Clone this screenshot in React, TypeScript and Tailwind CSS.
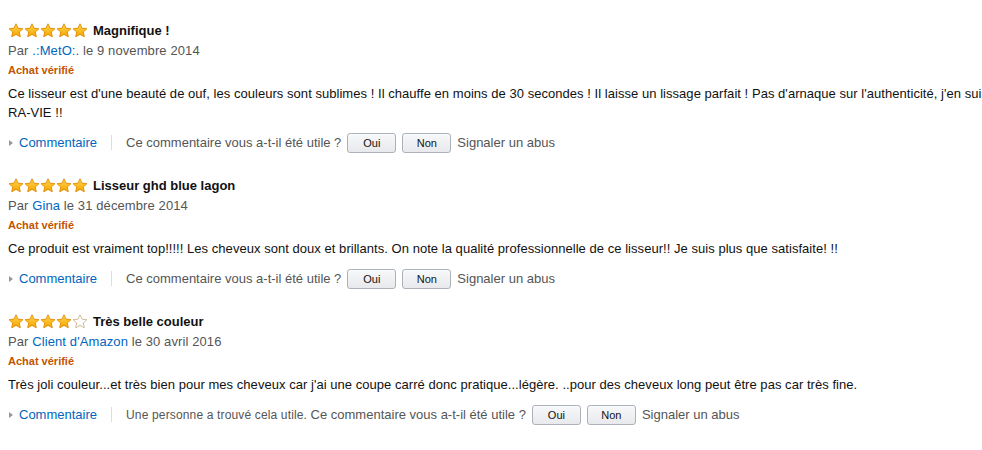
import React from "react";

function Star({ filled }: { filled: boolean }) {
  return (
    <svg width="16" height="15" viewBox="0 0 16 15" className="block">
      <defs>
        <linearGradient id="sg" x1="0" y1="0" x2="0" y2="1">
          <stop offset="0" stopColor="#ffd54a" />
          <stop offset="1" stopColor="#f6a500" />
        </linearGradient>
      </defs>
      <path
        d="M8 0.8 L10.1 5.2 L14.9 5.7 L11.3 9 L12.3 13.8 L8 11.4 L3.7 13.8 L4.7 9 L1.1 5.7 L5.9 5.2 Z"
        fill={filled ? "url(#sg)" : "#ffffff"}
        stroke={filled ? "#e08a00" : "#c9b38a"}
        strokeWidth="0.9"
        strokeLinejoin="round"
      />
    </svg>
  );
}

function Btn({ label }: { label: string }) {
  return (
    <button className="h-[20px] w-[49px] rounded-[3px] border border-[#adb1b8] bg-gradient-to-b from-[#f7f8fa] to-[#e7e9ec] text-[11px] leading-[18px] text-[#111] shadow-[inset_0_1px_0_rgba(255,255,255,0.6)]">
      {label}
    </button>
  );
}

type Review = {
  stars: number;
  title: string;
  author: string;
  date: string;
  body: string;
  helpful?: string;
};

const reviews: Review[] = [
  {
    stars: 5,
    title: "Magnifique !",
    author: ".:MetO:.",
    date: "le 9 novembre 2014",
    body:
      "Ce lisseur est d'une beauté de ouf, les couleurs sont sublimes ! Il chauffe en moins de 30 secondes ! Il laisse un lissage parfait ! Pas d'arnaque sur l'authenticité, j'en suis RA-VIE !!",
  },
  {
    stars: 5,
    title: "Lisseur ghd blue lagon",
    author: "Gina",
    date: "le 31 décembre 2014",
    body:
      "Ce produit est vraiment top!!!!! Les cheveux sont doux et brillants. On note la qualité professionnelle de ce lisseur!! Je suis plus que satisfaite! !!",
  },
  {
    stars: 4,
    title: "Très belle couleur",
    author: "Client d'Amazon",
    date: "le 30 avril 2016",
    body:
      "Très joli couleur...et très bien pour mes cheveux car j'ai une coupe carré donc pratique...légère. ..pour des cheveux long peut être pas car très fine.",
    helpful: "Une personne a trouvé cela utile. ",
  },
];

function ReviewBlock({ r }: { r: Review }) {
  return (
    <div className="flex flex-col">
      <div className="flex h-[19px] items-center">
        <div className="flex w-[85px] items-center">
          {[0, 1, 2, 3, 4].map((i) => (
            <Star key={i} filled={i < r.stars} />
          ))}
        </div>
        <span className="text-[13px] font-bold leading-[19px] text-[#111]">{r.title}</span>
      </div>
      <div className="mt-[1px] text-[13px] leading-[19px] tracking-[0.1px] text-[#555]">
        Par <span className="text-[#0066c0]">{r.author}</span> {r.date}
      </div>
      <div className="mt-[1px] text-[11px] font-bold leading-[19px] text-[#c45500]">Achat vérifié</div>
      <div className="mt-[4px] w-[1000px] text-[13px] leading-[19px] tracking-[0.04px] text-[#111]">{r.body}</div>
      <div className="mt-[10px] flex h-[21px] items-center text-[13px] text-[#555]">
        <span className="ml-[1px] mr-[6px] h-0 w-0 border-y-[3.5px] border-l-[4px] border-y-transparent border-l-[#999]" />
        <span className="text-[#0066c0]">Commentaire</span>
        <span className="mx-[14px] h-[15px] w-px bg-[#ddd]" />
        <span>
          {r.helpful ? <span className="text-[12px] tracking-[0.15px]">{r.helpful}</span> : null}
          Ce commentaire vous a-t-il été utile ?
        </span>
        <span className="ml-[6px]">
          <Btn label="Oui" />
        </span>
        <span className="ml-[6px]">
          <Btn label="Non" />
        </span>
        <span className="ml-[6px]">Signaler un abus</span>
      </div>
    </div>
  );
}

export default function App() {
  return (
    <div
      className="h-[450px] w-[982px] overflow-hidden bg-white pl-[8px] pt-[21px]"
      style={{ fontFamily: '"Liberation Sans", Arial, sans-serif' }}
    >
      <div className="flex flex-col gap-[23px]">
        {reviews.map((r, i) => (
          <ReviewBlock key={i} r={r} />
        ))}
      </div>
    </div>
  );
}
